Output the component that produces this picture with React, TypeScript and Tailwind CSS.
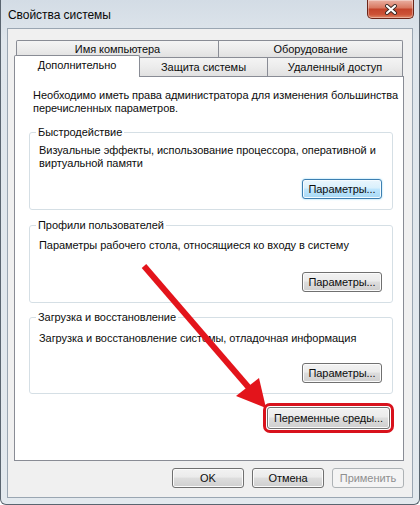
import React from "react";

const btnBase =
  "h-[20px] rounded-[3px] border flex items-center justify-center leading-[13px] whitespace-nowrap";
const btnNormal =
  "border-[#707070] bg-[linear-gradient(180deg,#f2f2f2_0%,#ebebeb_45%,#dddddd_50%,#cfcfcf_100%)] shadow-[inset_0_0_0_1px_#fbfbfb]";
const btnFocus =
  "border-[#3c7fb1] bg-[linear-gradient(180deg,#eaf6fd_0%,#d9f0fc_45%,#bee6fd_50%,#a7d9f5_100%)] shadow-[inset_0_0_0_1px_#f4fbff,0_0_2px_#7fd2f5]";
const tabInactive =
  "border-[#898c95] bg-[linear-gradient(180deg,#f4f4f4_0%,#ececec_50%,#e1e1e1_100%)] flex items-center justify-center whitespace-nowrap";

function Group({
  title,
  desc,
  descMt,
  btnMt,
  focused,
  mt,
}: {
  title: string;
  desc: React.ReactNode;
  descMt: string;
  btnMt: string;
  focused?: boolean;
  mt: string;
}) {
  return (
    <fieldset
      className={`${mt} border border-[#d5dfe5] rounded-[3px] pl-[9px] pr-[10px] pb-[10px]`}
    >
      <legend className="ml-[-3px] px-[2px] leading-[13px] whitespace-nowrap">{title}</legend>
      <div className={`${descMt} leading-[13px] whitespace-nowrap`}>{desc}</div>
      <div className={`${btnMt} flex justify-end`}>
        <div
          className={`${btnBase} ${focused ? btnFocus : btnNormal} w-[80px]`}
        >
          Параметры...
        </div>
      </div>
    </fieldset>
  );
}

export default function App() {
  return (
    <div className="relative w-[420px] h-[505px] overflow-hidden flex flex-col bg-[linear-gradient(180deg,#d3dce5_0%,#dfe6ec_8%,#e3e9ee_100%)] border-l border-r border-b border-[#5a6570] rounded-b-[6px] font-['Liberation_Sans',Arial,sans-serif] text-[11px] tracking-[-0.05px] text-[#0d0d0d]">
      {/* Title bar */}
      <div className="h-[28px] shrink-0 flex items-start justify-between pl-[7px] pr-[5px]">
        <span className="mt-[8px] leading-[14px] text-[12px] text-[#0a0a0a] whitespace-nowrap">
          Свойства системы
        </span>
        <div className="w-[47px] h-[19px] rounded-b-[5px] border border-t-0 border-[#6b2519] bg-[linear-gradient(180deg,#eab0a2_0%,#d97a63_42%,#c4442b_52%,#cc5236_80%,#e08a68_100%)] shadow-[inset_0_0_0_1px_rgba(255,255,255,0.35)] flex items-center justify-center">
          <svg width="14" height="11" viewBox="0 0 14 11">
            <path
              d="M3 2 L11 9 M11 2 L3 9"
              stroke="#3b2a26"
              strokeWidth="4"
              strokeLinecap="round"
            />
            <path
              d="M3 2 L11 9 M11 2 L3 9"
              stroke="#ffffff"
              strokeWidth="2.2"
              strokeLinecap="round"
            />
          </svg>
        </div>
      </div>

      {/* Client area */}
      <div className="mx-[6px] h-[470px] shrink-0 border border-[#9aa6b2] bg-[#f0f0f0] flex flex-col pl-[6px] pr-[8px] pt-[11px]">
        {/* Tab row 1 */}
        <div className="ml-[2px] flex h-[17px]">
          <div className={`${tabInactive} w-[203px] border border-b-0 rounded-tl-[2px] pt-[1px]`}>
            Имя компьютера
          </div>
          <div className={`${tabInactive} w-[184px] border border-l-0 border-b-0 rounded-tr-[2px] pt-[1px]`}>
            Оборудование
          </div>
        </div>
        {/* Tab row 2 */}
        <div className="flex h-[19px] items-start">
          <div className="relative z-10 -mt-[2px] h-[22px] w-[126px] bg-white border border-b-0 border-[#898c95] rounded-t-[2px] flex items-center justify-center pb-[3px] whitespace-nowrap">
            Дополнительно
          </div>
          <div className={`${tabInactive} h-[19px] w-[128px] border border-l-0 border-b-0`}>
            Защита системы
          </div>
          <div className={`${tabInactive} h-[19px] w-[135px] border border-l-0 border-b-0`}>
            Удаленный доступ
          </div>
        </div>
        {/* Panel */}
        <div className="h-[385px] shrink-0 bg-white border border-[#898c95] flex flex-col pl-[14px] pr-[10px] pt-[12px]">
          <div className="ml-[4px] leading-[13px] whitespace-nowrap">
            Необходимо иметь права администратора для изменения большинства
            <br />
            перечисленных параметров.
          </div>
          <Group
            mt="mt-[11px]"
            title="Быстродействие"
            desc={
              <>
                Визуальные эффекты, использование процессора, оперативной и
                <br />
                виртуальной памяти
              </>
            }
            descMt="mt-[5px]"
            btnMt="mt-[9px]"
            focused
          />
          <Group
            mt="mt-[9px]"
            title="Профили пользователей"
            desc="Параметры рабочего стола, относящиеся ко входу в систему"
            descMt="mt-[7px]"
            btnMt="mt-[20px]"
          />
          <Group
            mt="mt-[8px]"
            title="Загрузка и восстановление"
            desc="Загрузка и восстановление системы, отладочная информация"
            descMt="mt-[8px]"
            btnMt="mt-[18px]"
          />
          <div className="mt-[13px] flex justify-end pr-[3px]">
            <div
              className={`${btnBase} ${btnNormal} h-[22px] w-[123px] outline-solid outline-3 outline-[#d8121c] outline-offset-1`}
            >
              Переменные среды...
            </div>
          </div>
        </div>
        {/* Bottom buttons */}
        <div className="mt-[7px] flex justify-end gap-[8px]">
          <div className={`${btnBase} ${btnNormal} w-[72px]`}>OK</div>
          <div className={`${btnBase} ${btnNormal} w-[72px]`}>Отмена</div>
          <div
            className={`${btnBase} w-[72px] border-[#adb2b5] bg-[#f4f4f4] text-[#8f8f8f]`}
          >
            Применить
          </div>
        </div>
      </div>

      {/* Red annotation arrow */}
      <svg
        className="absolute left-0 top-0 pointer-events-none"
        width="420"
        height="505"
        viewBox="0 0 420 505"
      >
        <line
          x1="143"
          y1="266"
          x2="249"
          y2="389"
          stroke="#e3141b"
          strokeWidth="6"
        />
        <polygon points="265,408 235,396 258,378" fill="#e3141b" />
      </svg>
    </div>
  );
}
